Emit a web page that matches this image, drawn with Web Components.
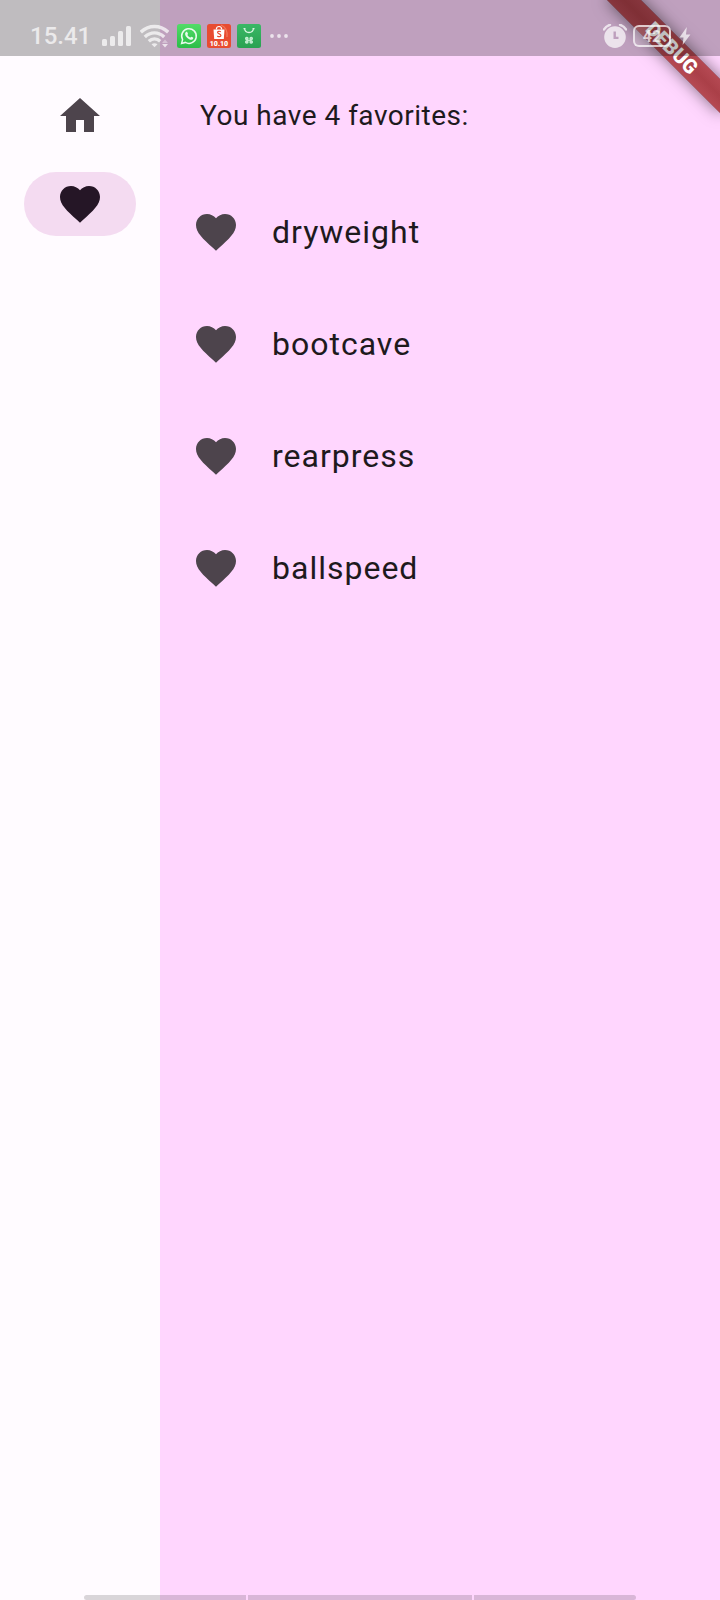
<!DOCTYPE html>
<html lang="en">
<head>
<meta charset="utf-8">
<meta name="viewport" content="width=device-width, initial-scale=1">
<title>Favorites</title>
<style>
  :root {
    --surface: #fffbff;
    --primary-container: #ffd6fe;
    --secondary-container: #f4dbf1;
    --on-secondary-container: #251626;
    --on-surface: #1e1a1d;
    --on-surface-variant: #4d444c;
    --status-height: 56px;
  }
  body { margin: 0; font-family: Roboto, "Liberation Sans", sans-serif; color: var(--on-surface); }
</style>
</head>
<body>
<namer-app></namer-app>
<script>
const HOME = 'M10 20v-6h4v6h5v-8h3L12 3 2 12h3v8z';
const HEART = 'M12 21.35l-1.45-1.32C5.4 15.36 2 12.28 2 8.5 2 5.42 4.42 3 7.5 3c1.74 0 3.41.81 4.5 2.09C13.09 3.81 14.76 3 16.5 3 19.58 3 22 5.42 22 8.5c0 3.78-3.4 6.86-8.55 11.54L12 21.35z';

function define(name, html, setup) {
  const template = document.createElement('template');
  template.innerHTML = html;
  customElements.define(name, class extends HTMLElement {
    constructor() {
      super();
      this.attachShadow({ mode: 'open' }).append(template.content.cloneNode(true));
    }
    connectedCallback() { if (setup) setup(this, this.shadowRoot); }
  });
}

define('md-icon', `
  <style>
    :host { display: block; width: 48px; height: 48px; flex: none; }
    svg { display: block; width: 100%; height: 100%; fill: currentColor; }
  </style>
  <svg viewBox="0 0 24 24" aria-hidden="true"><path></path></svg>`,
  (el, root) => root.querySelector('path').setAttribute('d', el.getAttribute('name') === 'home' ? HOME : HEART));

define('rail-item', `
  <style>
    :host { display: block; }
    button {
      display: flex; align-items: center; justify-content: center;
      width: 112px; height: 64px; padding: 0; border: 0; border-radius: 32px;
      background: transparent; color: var(--on-surface-variant); cursor: pointer;
    }
    :host([selected]) button { background: var(--secondary-container); color: var(--on-secondary-container); }
  </style>
  <button type="button"><slot></slot></button>`,
  (el, root) => root.querySelector('button').setAttribute('aria-label', el.getAttribute('label')));

define('navigation-rail', `
  <style>
    :host { display: block; background: var(--surface); }
    nav {
      display: flex; flex-direction: column; align-items: center; gap: 24px;
      padding-top: calc(var(--status-height) + 28px);
    }
  </style>
  <nav aria-label="Main"><slot></slot></nav>`);

define('favorite-item', `
  <style>
    :host { display: flex; align-items: center; gap: 32px; height: 112px; padding: 0 32px;
            font-size: 32px; line-height: 48px; letter-spacing: 1px; }
    md-icon { color: var(--on-surface-variant); }
  </style>
  <md-icon name="favorite"></md-icon><span><slot></slot></span>`,
  el => el.setAttribute('role', 'listitem'));

define('favorites-page', `
  <style>
    :host { display: block; background: var(--primary-container); padding-top: var(--status-height); }
    p { margin: 0; padding: 40px; font-size: 28px; line-height: 40px; letter-spacing: 0.018em; }
  </style>
  <main>
    <p><slot name="summary"></slot></p>
    <div role="list"><slot></slot></div>
  </main>`);

define('debug-banner', `
  <style>
    :host { display: block; position: absolute; top: 0; right: 0; width: 160px; height: 160px; overflow: hidden; pointer-events: none; }
    div {
      position: absolute; left: 32px; top: 36px; width: 160px; height: 24px; transform: rotate(45deg);
      background:
        linear-gradient(rgba(183, 28, 28, .63), rgba(183, 28, 28, .63)),
        linear-gradient(rgba(0, 0, 0, .3), rgba(0, 0, 0, .42), rgba(0, 0, 0, .3));
      box-shadow: 0 0 16px rgba(0, 0, 0, .5);
      color: #fff; font-size: 20px; line-height: 24px; font-weight: 900; text-align: center;
    }
  </style>
  <div><slot></slot></div>`);

define('status-bar', `
  <style>
    :host {
      display: flex; justify-content: space-between; box-sizing: border-box;
      position: absolute; top: 0; left: 0; right: 0; height: var(--status-height);
      padding: 16px 29px 0 30px; background: rgba(0, 0, 0, .25); color: rgba(255, 255, 255, .7);
    }
    .group { display: flex; align-items: center; height: 40px; }
    .time { font-size: 24px; line-height: 40px; font-weight: 500; margin-right: 11px; }
    svg { display: block; fill: currentColor; flex: none; }
    .wifi { margin: 0 8px; }
    .apps { display: flex; gap: 6px; margin-right: 8px; }
    .battery {
      box-sizing: border-box; width: 38px; height: 22px; margin: 0 8px 0 6px;
      border: 2px solid currentColor; border-radius: 6px;
      background: linear-gradient(90deg, rgba(255,255,255,.16) 42%, transparent 42%);
      font-size: 16px; line-height: 19px; font-weight: 700; text-align: center;
    }
  </style>
  <div class="group">
    <span class="time">15.41</span>
    <svg width="30" height="24" viewBox="0 0 30 24"><rect x="0" y="15" width="5" height="7" rx="1.5"/><rect x="8" y="12" width="5" height="10" rx="1.5"/><rect x="16" y="7" width="5" height="15" rx="1.5"/><rect x="24" y="2" width="5" height="20" rx="1.5"/></svg>
    <svg class="wifi" width="29" height="24" viewBox="0 0 29 24">
      <g fill="none" stroke="currentColor" stroke-width="3.4"><path d="M.8 8.2C8.8.6 20.2.6 28.2 8.2"/><path d="M4.8 13C10.5 7.5 18.5 7.5 24.2 13"/><path d="M8.8 17.3C12.2 14.2 16.8 14.2 20.2 17.3"/></g>
      <path d="M14.5 23.3l-3-3q3-2 6 0z"/><path opacity=".5" d="M22 19l3-3.5 3 3.5z"/><path d="M22 20h6l-3 3.5z"/>
    </svg>
    <span class="apps">
      <svg width="24" height="24" viewBox="0 0 24 24">
        <defs><linearGradient id="w" x2="0" y2="1"><stop stop-color="#52dc68"/><stop offset="1" stop-color="#2bbd48"/></linearGradient></defs>
        <rect width="24" height="24" rx="2.5" fill="url(#w)"/>
        <path d="M4.6 19.4l1-3.8a7.3 7.3 0 1 1 2.8 2.8z" fill="none" stroke="#e9fbed" stroke-width="1.5"/>
        <path d="M8.8 8.2c.6-.6 1.3-.5 1.5 0l.7 1.6c.1.5-.6 1-.6 1.3.6 1.2 1.5 2 2.7 2.5.5 0 .8-1 1.3-.9l1.7.8c.5.3 0 1.7-.8 2.1-1.4.7-3.7-.4-5.2-1.9-1.500-1.600-2.800-4-1.300-5.500z" fill="#e9fbed"/>
      </svg>
      <svg width="24" height="24" viewBox="0 0 24 24">
        <rect width="24" height="24" rx="2.5" fill="#e84c31"/>
        <path d="M14 1q7 3 6 12" fill="none" stroke="#f17b5d" stroke-width="1.2"/>
        <path d="M6.5 5.5h11l-.7 9.500H7.200z" fill="#fff"/>
        <path d="M9.300 5.500c0-4 5.400-4 5.400 0" fill="none" stroke="#fff" stroke-width="1.200"/>
        <path d="M13.800 7.800c-1.200-.9-3.300-.7-3.200.7.1 1.600 3.300 1.200 3.300 2.900 0 1.500-2.300 1.700-3.600.6" fill="none" stroke="#e84c31" stroke-width="1.200"/>
        <text x="12" y="22" text-anchor="middle" font-size="7" font-weight="900" fill="#fff">10.10</text>
      </svg>
      <svg width="24" height="24" viewBox="0 0 24 24">
        <defs><linearGradient id="t" x2="0" y2="1"><stop stop-color="#3ab866"/><stop offset="1" stop-color="#29a151"/></linearGradient></defs>
        <rect width="24" height="24" rx="2.5" fill="url(#t)"/>
        <path d="M7.500 4.500c.8 5.300 8.200 5.300 9 0M6.500 4.600h2M15.500 4.600h2" fill="none" stroke="#d9f5e2" stroke-width="1.300"/>
        <g fill="#8bd7a6" stroke="#c5efd3" stroke-width="1.300"><rect x="8.600" y="13.500" width="2.400" height="2" rx="1"/><rect x="13" y="13.500" width="2.400" height="2" rx="1"/><rect x="8.600" y="17" width="2.400" height="2" rx="1"/><rect x="13" y="17" width="2.400" height="2" rx="1"/><path d="M9.500 16.300h5"/></g>
      </svg>
    </span>
    <svg width="20" height="24" viewBox="0 0 20 24"><circle cx="3" cy="12" r="1.9"/><circle cx="10" cy="12" r="1.9"/><circle cx="17" cy="12" r="1.9"/></svg>
  </div>
  <div class="group">
    <svg width="24" height="24" viewBox="0 0 24 24">
      <path fill-rule="evenodd" d="M12 2.300a10.800 10.800 0 1 1 0 21.600 10.800 10.800 0 0 1 0-21.600zM10.500 7.500v7.500h5v-2.200h-2.600v-5.300z"/>
      <path d="M1 5.500Q3 2 7 .8M17 .8Q21 2 23 5.500" fill="none" stroke="currentColor" stroke-width="2.400" stroke-linecap="round"/>
    </svg>
    <span class="battery">42</span>
    <svg width="12" height="18" viewBox="0 0 12 18"><path d="M7.800 0L.5 10.500h4L3.600 18l7.800-10.500H7z"/></svg>
  </div>`);

define('gesture-bar', `
  <style>
    :host { display: grid; grid-template-columns: 162fr 224fr 162fr; gap: 2px; position: absolute; left: 84px; right: 84px; bottom: 0; height: 5px; }
    span { background: rgba(0, 0, 0, .15); }
    span:first-of-type { border-radius: 3px 0 0 3px; }
    span:last-of-type { border-radius: 0 3px 3px 0; }
  </style>
  <span></span><span></span><span></span>`);

define('namer-app', `
  <style>
    :host { display: grid; grid-template-columns: 160px 1fr; min-height: 100vh; position: relative; overflow: hidden; }
  </style>
  <navigation-rail>
    <rail-item label="Home"><md-icon name="home"></md-icon></rail-item>
    <rail-item label="Favorites" selected><md-icon name="favorite"></md-icon></rail-item>
  </navigation-rail>
  <favorites-page>
    <span slot="summary">You have 4 favorites:</span>
    <favorite-item>dryweight</favorite-item>
    <favorite-item>bootcave</favorite-item>
    <favorite-item>rearpress</favorite-item>
    <favorite-item>ballspeed</favorite-item>
  </favorites-page>
  <debug-banner>DEBUG</debug-banner>
  <status-bar></status-bar>
  <gesture-bar></gesture-bar>`);
</script>
</body>
</html>
